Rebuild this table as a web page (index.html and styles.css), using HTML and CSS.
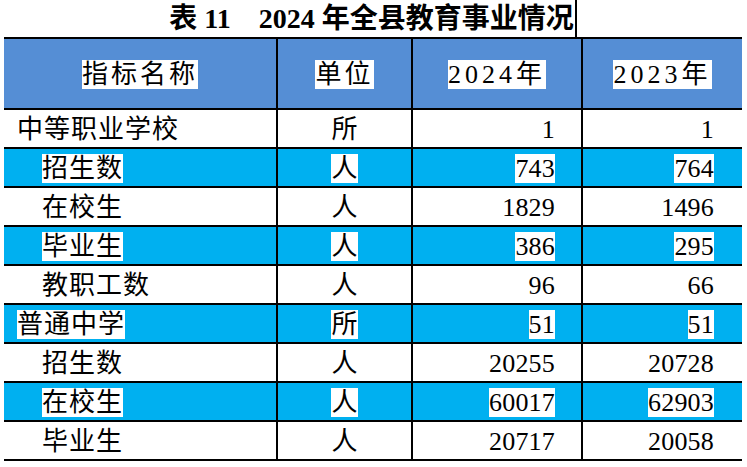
FILE: index.html
```html
<!DOCTYPE html>
<html lang="zh-CN">
<head>
<meta charset="utf-8">
<title>表11 2024年全县教育事业情况</title>
<link rel="stylesheet" href="styles.css">
</head>
<body>
<div class="sheet">
  <div class="title-row"><span class="title">表 11　2024 年全县教育事业情况</span></div>
  <table class="data">
    <colgroup>
      <col class="c1"><col class="c2"><col class="c3"><col class="c4">
    </colgroup>
    <thead>
      <tr class="head">
        <th><span class="hl">指标名称</span></th>
        <th><span class="hl">单位</span></th>
        <th><span class="hl">2024年</span></th>
        <th><span class="hl">2023年</span></th>
      </tr>
    </thead>
    <tbody>
      <tr>
        <td class="name">中等职业学校</td><td class="unit">所</td><td class="num">1</td><td class="num">1</td>
      </tr>
      <tr class="cyan">
        <td class="name sub"><span class="hl">招生数</span></td><td class="unit"><span class="hl">人</span></td><td class="num"><span class="hl">743</span></td><td class="num"><span class="hl">764</span></td>
      </tr>
      <tr>
        <td class="name sub">在校生</td><td class="unit">人</td><td class="num">1829</td><td class="num">1496</td>
      </tr>
      <tr class="cyan">
        <td class="name sub"><span class="hl">毕业生</span></td><td class="unit"><span class="hl">人</span></td><td class="num"><span class="hl">386</span></td><td class="num"><span class="hl">295</span></td>
      </tr>
      <tr>
        <td class="name sub">教职工数</td><td class="unit">人</td><td class="num">96</td><td class="num">66</td>
      </tr>
      <tr class="cyan">
        <td class="name"><span class="hl">普通中学</span></td><td class="unit"><span class="hl">所</span></td><td class="num"><span class="hl">51</span></td><td class="num"><span class="hl">51</span></td>
      </tr>
      <tr>
        <td class="name sub">招生数</td><td class="unit">人</td><td class="num">20255</td><td class="num">20728</td>
      </tr>
      <tr class="cyan">
        <td class="name sub"><span class="hl">在校生</span></td><td class="unit"><span class="hl">人</span></td><td class="num"><span class="hl">60017</span></td><td class="num"><span class="hl">62903</span></td>
      </tr>
      <tr>
        <td class="name sub">毕业生</td><td class="unit">人</td><td class="num">20717</td><td class="num">20058</td>
      </tr>
    </tbody>
  </table>
</div>
</body>
</html>
```
FILE: styles.css
```css
html, body {
  margin: 0;
  padding: 0;
  background: #ffffff;
}

body {
  font-family: "Liberation Serif", "Noto Sans CJK SC", serif;
  color: #000000;
}

.sheet {
  padding-left: 4px;
  width: 738px;
}

.title-row {
  height: 37px;
  display: flex;
  justify-content: center;
}

.title {
  display: block;
  height: 37px;
  line-height: 37px;
  font-size: 28px;
  font-weight: bold;
  padding-right: 1px;
  border-right: 2px solid #000000;
}

.data {
  width: 738px;
  table-layout: fixed;
  border-collapse: collapse;
  border-top: 2px solid #000000;
  border-bottom: 2px solid #000000;
}

.c1 { width: 273px; }
.c2 { width: 135px; }
.c3 { width: 170px; }
.c4 { width: 160px; }

.data th,
.data td {
  padding: 0;
  font-size: 26px;
  font-weight: normal;
  white-space: nowrap;
  border-top: 2px solid #000000;
}

.data th + th,
.data td + td {
  border-left: 2px solid #000000;
}

.head {
  height: 71px;
  background: #558ed5;
}

.data .head th {
  text-align: center;
  letter-spacing: 3px;
  line-height: 26px;
  padding-top: 2px;
}

.data .head th:nth-child(n+3) {
  letter-spacing: 4px;
}

tbody tr {
  height: 39px;
}

.data tbody td {
  line-height: 26px;
  padding-top: 2px;
}

.cyan {
  background: #00b0f0;
}

.hl {
  background: #ffffff;
}

.data td.name {
  text-align: left;
  padding-left: 13px;
  letter-spacing: 1px;
}

.data td.name.sub {
  padding-left: 38px;
}

.data td.unit {
  text-align: center;
}

.data td.num {
  text-align: right;
  padding-right: 26px;
  letter-spacing: 0.2px;
}

.data td.num:last-child {
  padding-right: 28px;
}
```
